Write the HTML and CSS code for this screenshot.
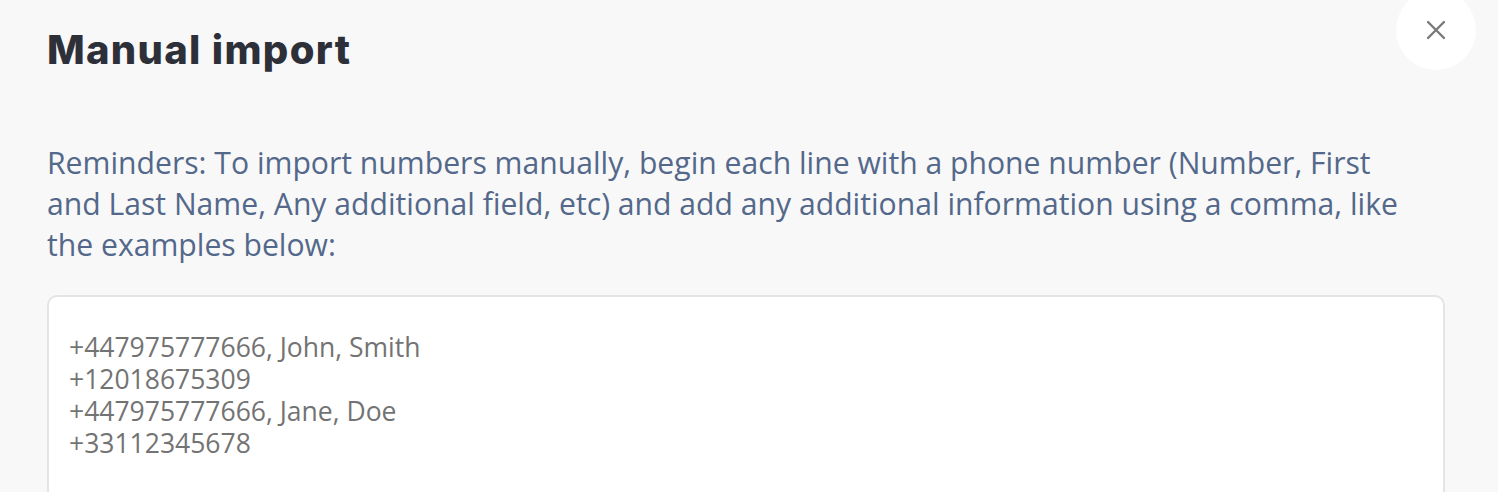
FILE: index.html
```html
<!DOCTYPE html>
<html lang="en">
<head>
<meta charset="utf-8">
<title>Manual import</title>
<link rel="stylesheet" href="styles.css">
</head>
<body>
<div class="modal">
  <button class="close" aria-label="Close">
    <svg width="20" height="20" viewBox="0 0 20 20"><path d="M2 2 L18 18 M18 2 L2 18" stroke="#7a7a7a" stroke-width="2.4" stroke-linecap="round" fill="none"/></svg>
  </button>
  <h1 class="title">Manual import</h1>
  <p class="reminder">Reminders: To import numbers manually, begin each line with a phone number (Number, First and Last Name, Any additional field, etc) and add any additional information using a comma, like the examples below:</p>
  <div class="field">
    <div class="placeholder">
      <div class="line">+447975777666, John, Smith</div>
      <div class="line">+12018675309</div>
      <div class="line">+447975777666, Jane, Doe</div>
      <div class="line">+33112345678</div>
    </div>
  </div>
</div>
</body>
</html>
```
FILE: styles.css
```css
html, body {
  margin: 0;
  padding: 0;
  background: #f8f8f8;
}
.modal {
  position: relative;
  padding: 24px 53px 0 47px;
  height: 492px;
  box-sizing: border-box;
  overflow: hidden;
}
.close {
  position: absolute;
  top: -10px;
  right: 22px;
  width: 80px;
  height: 80px;
  border-radius: 50%;
  border: none;
  background: #ffffff;
  display: flex;
  align-items: center;
  justify-content: center;
  padding: 0;
}
.title {
  margin: 0;
  font-family: Inter, "Liberation Sans", sans-serif;
  font-weight: 800;
  font-size: 40px;
  line-height: 52px;
  color: #2d3038;
  letter-spacing: 1.3px;
}
.reminder {
  margin: 66px 0 0 0;
  max-width: 1376px;
  font-family: "Open Sans", sans-serif;
  font-size: 30.15px;
  line-height: 41px;
  color: #53688a;
}
.field {
  margin-top: 30px;
  background: #ffffff;
  border: 2px solid #e4e4e4;
  border-radius: 10px;
  padding: 34px 20px 40px 20px;
  height: 300px;
}
.placeholder {
  display: flex;
  flex-direction: column;
  font-family: "Open Sans", sans-serif;
  font-size: 26.5px;
  line-height: 32px;
  color: #737373;
}
.line {
  height: 32px;
  white-space: nowrap;
}
```
